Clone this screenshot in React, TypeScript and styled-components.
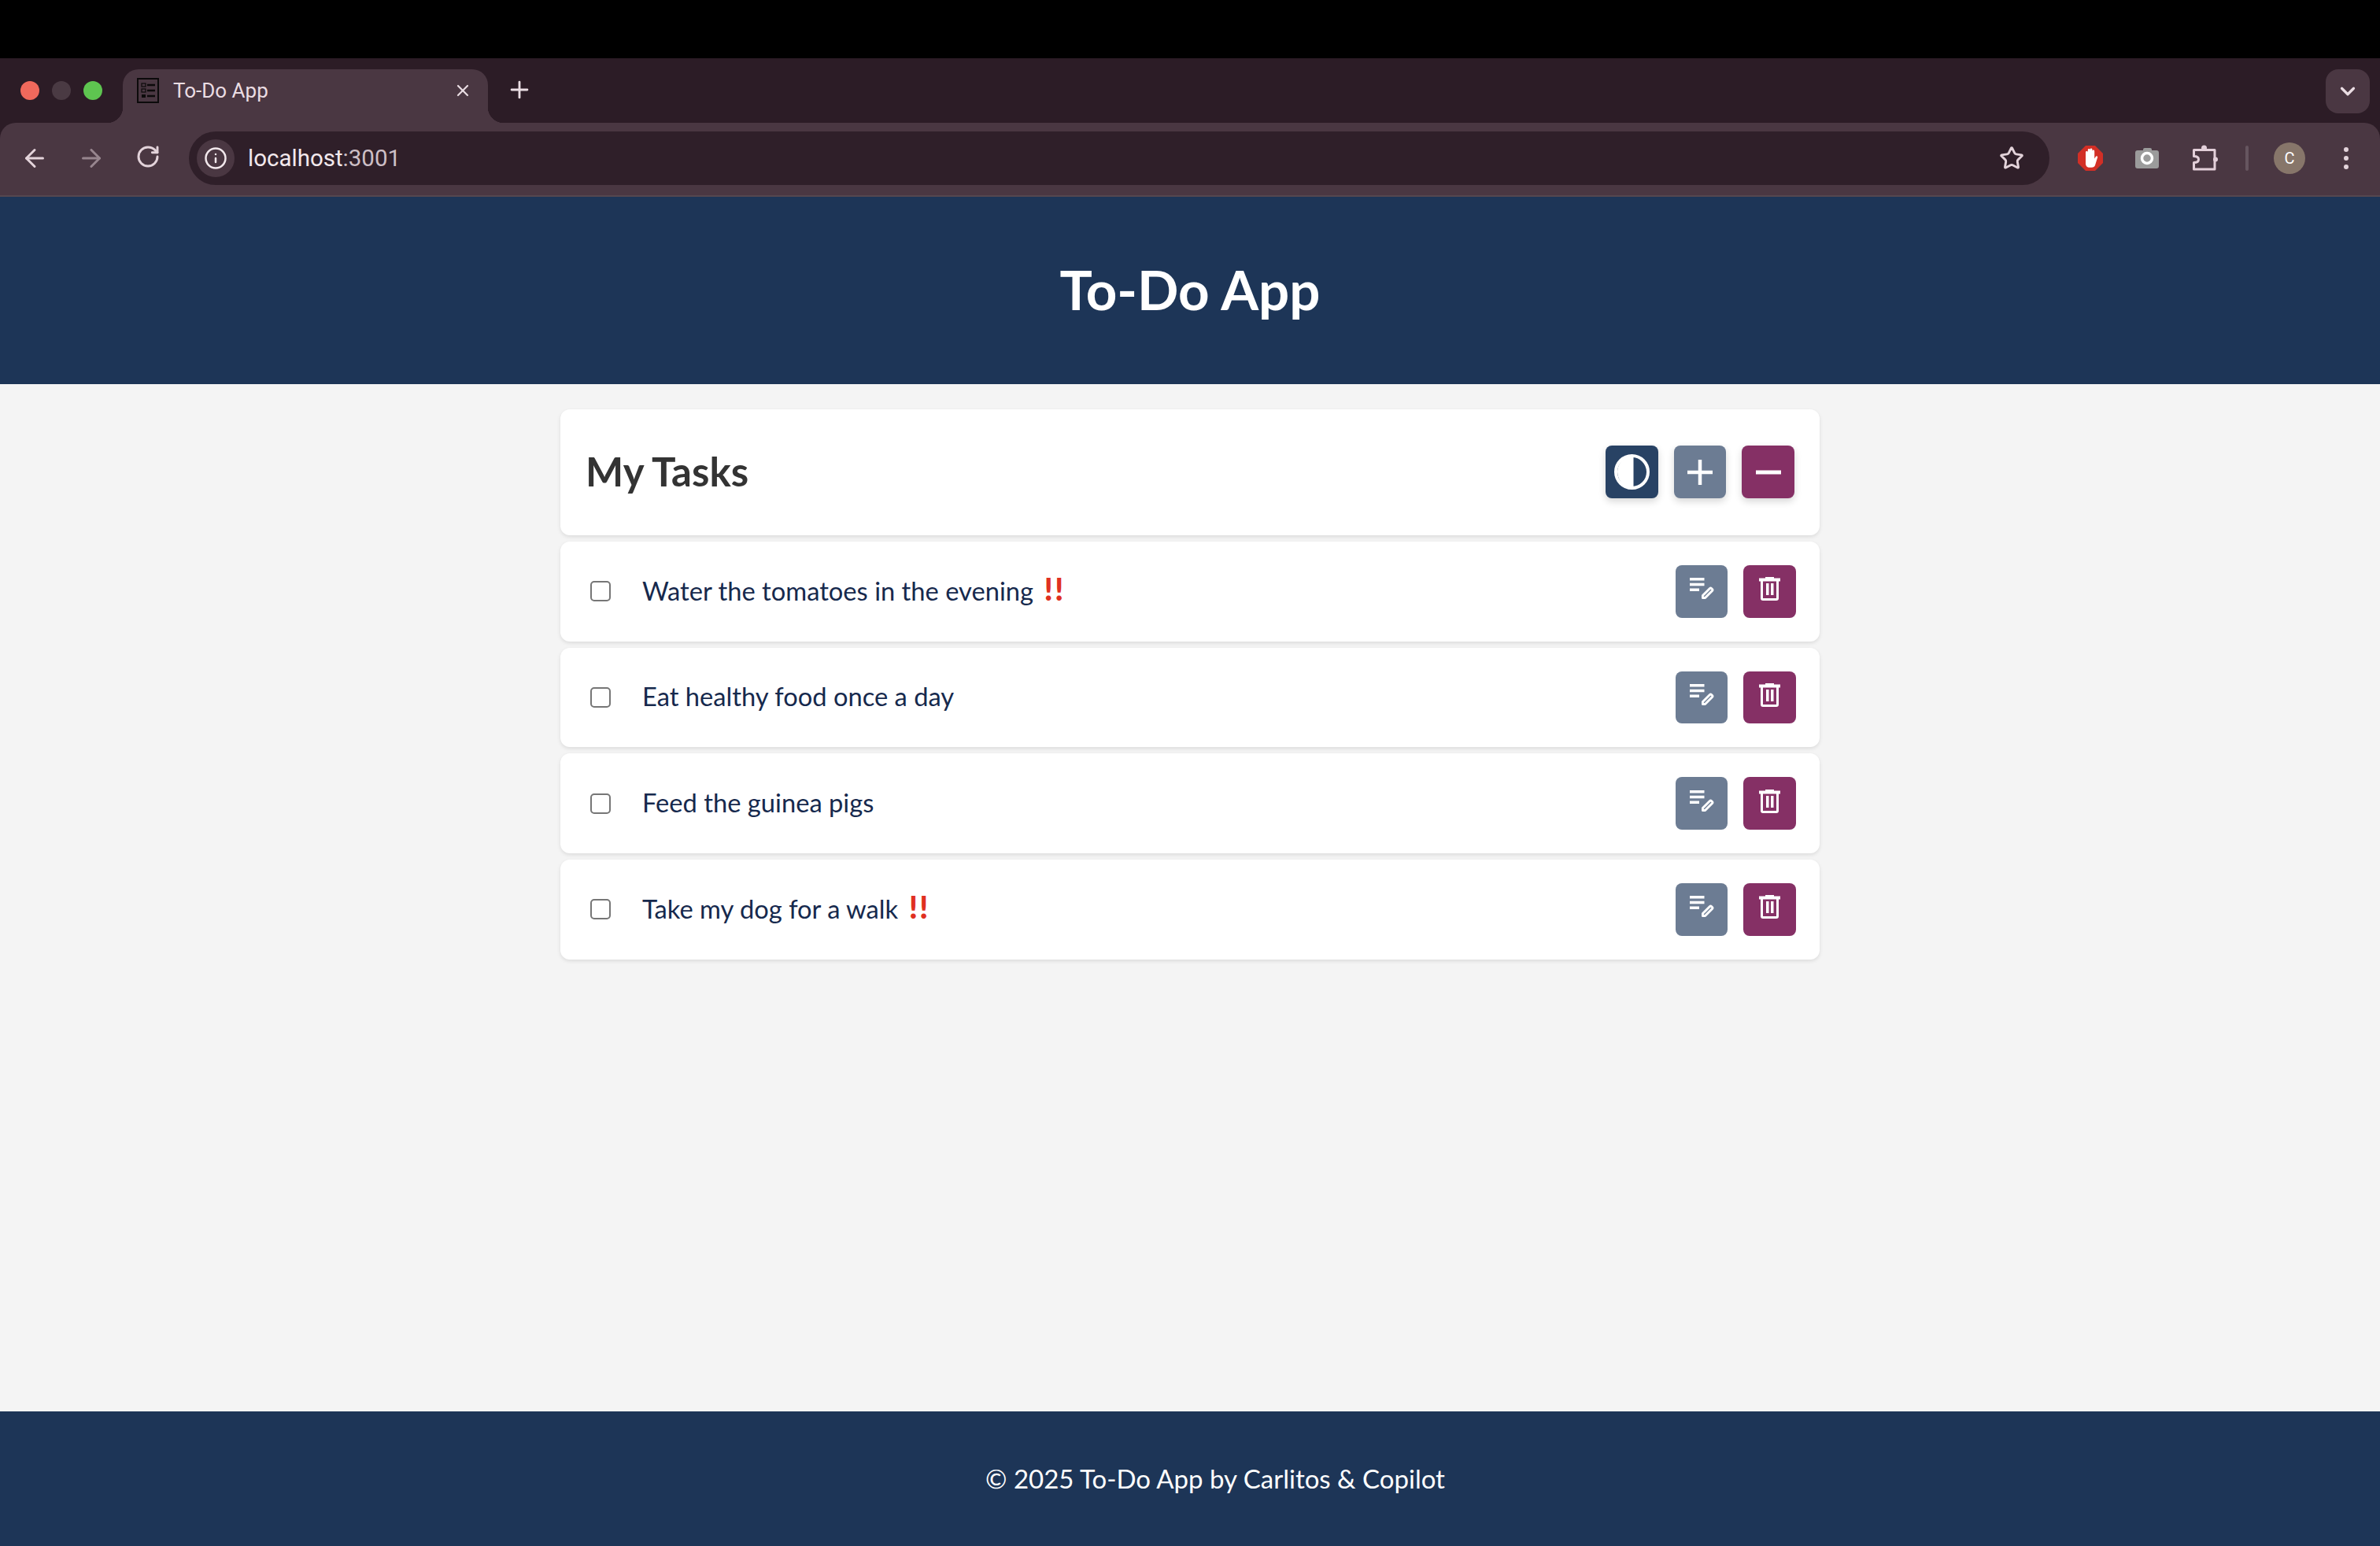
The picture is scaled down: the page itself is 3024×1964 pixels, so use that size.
import React from 'react';
import styled, { createGlobalStyle } from 'styled-components';
import { ArrowLeft, ArrowRight, Info, Plus, RotateCw, Star, X, ChevronDown } from 'lucide-react';

const GlobalStyle = createGlobalStyle`
  html, body { margin: 0; padding: 0; background: #f4f4f4; }
  * { box-sizing: border-box; }
`;

const Page = styled.div`
  display: flex;
  flex-direction: column;
  width: 3024px;
  height: 1964px;
  overflow: hidden;
  font-family: Lato, 'Noto Sans', sans-serif;
  background: #f4f4f4;
`;

const Notch = styled.div`
  flex: 0 0 74px;
  background: #000;
`;

const Chrome = styled.div`
  flex: 0 0 176px;
  display: flex;
  flex-direction: column;
  background: #2c1c26;
`;

const TabStrip = styled.div`
  flex: 0 0 82px;
  display: flex;
  align-items: flex-start;
  color: #eadde3;
  font-family: Roboto, sans-serif;
`;

const Lights = styled.div`
  display: flex;
  gap: 16px;
  padding: 29px 0 0 26px;
  width: 156px;
`;

const Light = styled.span<{ $color: string }>`
  width: 24px;
  height: 24px;
  border-radius: 50%;
  background: ${(p) => p.$color};
`;

const Tab = styled.div`
  position: relative;
  display: flex;
  align-items: center;
  width: 464px;
  height: 68px;
  margin-top: 14px;
  padding: 0 20px 14px 18px;
  border-radius: 20px 20px 0 0;
  background: #4a3742;
  font-size: 26px;

  &::before, &::after {
    content: '';
    position: absolute;
    bottom: 0;
    width: 20px;
    height: 20px;
    background: radial-gradient(circle at var(--cx) 0, transparent 20px, #4a3742 20.5px);
  }
  &::before { left: -20px; --cx: 0; }
  &::after { right: -20px; --cx: 20px; }
`;

const TabTitle = styled.span`
  flex: 1;
  margin-left: 18px;
`;

const NewTab = styled.div`
  display: flex;
  margin: 23px 0 0 23px;
`;

const TabMenu = styled.div`
  display: flex;
  align-items: center;
  justify-content: center;
  width: 56px;
  height: 56px;
  margin: 14px 13px 0 auto;
  border-radius: 16px;
  background: #4a3742;
`;

const Toolbar = styled.div`
  flex: 0 0 94px;
  display: flex;
  align-items: center;
  padding: 0 0 2px 26px;
  border-radius: 20px 20px 0 0;
  border-bottom: 2px solid #55474f;
  background: #4a3742;
  color: #e3d3da;
`;

const NavGroup = styled.div`
  display: flex;
  gap: 36px;
  margin-right: 34px;
`;

const NavButton = styled.div<{ $dim?: boolean }>`
  display: flex;
  justify-content: center;
  width: 36px;
  opacity: ${(p) => (p.$dim ? 0.5 : 1)};
`;

const Omnibox = styled.div`
  flex: 0 0 2364px;
  display: flex;
  align-items: center;
  height: 68px;
  padding: 0 32px 0 10px;
  border-radius: 34px;
  background: #2f1f29;
`;

const InfoChip = styled.div`
  display: flex;
  align-items: center;
  justify-content: center;
  width: 48px;
  height: 48px;
  border-radius: 50%;
  background: #4a3742;
  color: #f2e8ec;
`;

const Url = styled.span`
  flex: 1;
  margin-left: 17px;
  font-family: Roboto, sans-serif;
  font-size: 29.5px;
  color: #f2e8ec;

  & > span { color: #cdbfc6; }
`;

const Extensions = styled.div`
  display: flex;
  align-items: center;
`;

const ExtSlot = styled.div<{ $w: number }>`
  display: flex;
  justify-content: center;
  width: ${(p) => p.$w}px;
`;

const Divider = styled.div`
  width: 4px;
  height: 32px;
  margin-right: 32px;
  border-radius: 2px;
  background: #66555f;
`;

const Avatar = styled.div`
  display: flex;
  align-items: center;
  justify-content: center;
  width: 40px;
  height: 40px;
  border-radius: 50%;
  background: #87766a;
  color: #fff;
  font-family: Roboto, sans-serif;
  font-size: 20px;
`;

const Dots = styled.div`
  display: flex;
  flex-direction: column;
  gap: 5px;
  margin-left: 49px;

  & > span {
    width: 6px;
    height: 6px;
    border-radius: 50%;
    background: #e3d3da;
  }
`;

const Header = styled.header`
  flex: 0 0 238px;
  display: flex;
  align-items: center;
  justify-content: center;
  padding-bottom: 4px;
  background: #1d3557;
  color: #fff;
`;

const AppTitle = styled.h1`
  margin: 0;
  font-size: 69px;
  font-weight: 700;
`;

const Main = styled.main`
  flex: 1;
  display: flex;
  flex-direction: column;
  gap: 8px;
  width: 1600px;
  margin: 0 auto;
  padding-top: 32px;
`;

const Card = styled.div`
  display: flex;
  align-items: center;
  background: #fff;
  border-radius: 12px;
  box-shadow: 0 2px 5px rgba(0, 0, 0, 0.1);
`;

const TitleCard = styled(Card)`
  height: 160px;
  padding: 0 32px 1px 32px;
`;

const ListTitle = styled.h2`
  flex: 1;
  margin: 0 0 2px;
  color: #333;
  font-size: 51px;
  font-weight: 700;
`;

const Actions = styled.div`
  display: flex;
  gap: 20px;
`;

const IconButton = styled.button<{ $bg: string; $raised?: boolean; $w?: number }>`
  display: flex;
  align-items: center;
  justify-content: center;
  width: ${(p) => p.$w ?? 67}px;
  height: ${(p) => (p.$raised ? 67 : 66.5)}px;
  padding: 0;
  border: 0;
  border-radius: 8px;
  background: ${(p) => p.$bg};
  box-shadow: ${(p) => (p.$raised ? '0 4px 10px rgba(0, 0, 0, 0.16)' : 'none')};

  & > svg.row-icon { margin-bottom: 6px; }
`;

const TaskRow = styled(Card)`
  height: 126.67px;
  padding: 0 30px 0 38px;
`;

const Check = styled.span`
  flex: 0 0 26px;
  height: 26px;
  border: 2px solid #767676;
  border-radius: 5px;
  background: #fff;
`;

const TaskText = styled.span`
  flex: 1;
  margin: 0 0 2px 40px;
  color: #16294d;
  font-size: 32.7px;
`;

const Urgent = styled.span`
  margin-left: 2px;
  color: #e03021;
  font-size: 40px;
  font-weight: 900;
  line-height: 0;
  letter-spacing: 2px;
`;

const Footer = styled.footer`
  flex: 0 0 171px;
  display: flex;
  align-items: center;
  justify-content: center;
  padding: 0 0 2px 64px;
  background: #1d3557;
  color: #fff;
  font-size: 33px;
`;

const Favicon = () => (
  <svg width="28" height="32" viewBox="0 0 28 32">
    <rect x="1" y="1" width="26" height="30" fill="none" stroke="#0c0a0b" strokeWidth="2" />
    <rect x="6" y="7" width="5" height="4" fill="none" stroke="#0c0a0b" strokeWidth="1.2" />
    <rect x="6" y="14" width="5" height="4" fill="none" stroke="#0c0a0b" strokeWidth="1.2" />
    <rect x="6" y="21" width="5" height="4" fill="#0c0a0b" />
    <path d="M13 9h10M13 16h10M13 23h10" stroke="#0c0a0b" strokeWidth="2.4" />
  </svg>
);

const AdBlock = () => (
  <svg width="32" height="32" viewBox="0 0 32 32">
    <path d="M10 0h12l10 10v12L22 32H10L0 22V10z" fill="#d22f26" />
    <path
      d="M10 17V8.500a1.400 1.400 0 0 1 2.800 0V5.500a1.400 1.400 0 0 1 2.800 0V5a1.400 1.400 0 0 1 2.800 0v2a1.400 1.400 0 0 1 2.800 0v9.500l1.600-2.600c.9-1.400 3-.4 2.300 1.200L22 25c-.8 1.800-2 2.800-4.500 2.800H15c-3 0-5-2-5-5z"
      fill="#fff"
    />
  </svg>
);

const Camera = () => (
  <svg width="30" height="28" viewBox="0 0 30 28">
    <path
      d="M10 3q0-2 2-2h7q2 0 2 2v1h6q3 0 3 3v17q0 3-3 3H3q-3 0-3-3V7q0-3 3-3h7z"
      fill="#9b9b9b"
    />
    <circle cx="15" cy="14" r="6.500" fill="none" stroke="#fff" strokeWidth="3.500" />
  </svg>
);

const Puzzle = () => (
  <svg width="35" height="34" viewBox="-3 0 35 34" fill="none">
    <path
      d="M1.500 6.500h26.500v24.500H1.500v-8.500c4 0 6-1.500 6-4s-2-4-6-4z"
      stroke="#e3cfd9"
      strokeWidth="3"
      strokeLinejoin="round"
    />
    <circle cx="14.500" cy="4" r="3.500" fill="#e3cfd9" />
    <circle cx="29" cy="18.500" r="3" fill="#e3cfd9" />
  </svg>
);

const ContrastIcon = () => (
  <svg width="45" height="45" viewBox="0 0 45 45">
    <circle cx="22.500" cy="22.500" r="20.500" fill="none" stroke="#fff" strokeWidth="4" />
    <path d="M24.500 2A20.500 20.500 0 0 0 24.500 43z" fill="#fff" />
  </svg>
);

const PlusIcon = () => (
  <svg width="32" height="32" viewBox="0 0 32 32">
    <path d="M16 0v32M0 16h32" stroke="#fff" strokeWidth="4.500" />
  </svg>
);

const MinusIcon = () => (
  <svg width="32" height="32" viewBox="0 0 32 32">
    <path d="M0 16h32" stroke="#fff" strokeWidth="5" />
  </svg>
);

const EditIcon = () => (
  <svg className="row-icon" width="31" height="28" viewBox="0 0 31 28" fill="none">
    <path d="M0 1.800h18.500M0 8.500h18.500M0 15.300h12" stroke="#fff" strokeWidth="3.500" />
    <path
      d="M16.500 25.500v-3l9-9a1.500 1.500 0 0 1 2 0l1 1a1.500 1.500 0 0 1 0 2l-9 9z"
      stroke="#fff"
      strokeWidth="3"
      strokeLinejoin="round"
    />
  </svg>
);

const TrashIcon = () => (
  <svg className="row-icon" width="27" height="30" viewBox="0 0 27 30" fill="none">
    <path d="M8 0h11v3H8zM0 1.500h27v4H0z" fill="#fff" />
    <path d="M3.500 5v22q0 1.500 1.500 1.500h17q1.500 0 1.500-1.500V5" stroke="#fff" strokeWidth="3" />
    <path d="M9 8h3.500v15H9zM15 8h3.500v15H15z" fill="#fff" />
  </svg>
);

const tasks = [
  { title: 'Water the tomatoes in the evening', urgent: true },
  { title: 'Eat healthy food once a day', urgent: false },
  { title: 'Feed the guinea pigs', urgent: false },
  { title: 'Take my dog for a walk', urgent: true },
];

const BrowserChrome = () => (
  <Chrome>
    <TabStrip>
      <Lights>
        <Light $color="#f0695c" />
        <Light $color="#4a3a43" />
        <Light $color="#5ec550" />
      </Lights>
      <Tab>
        <Favicon />
        <TabTitle>To-Do App</TabTitle>
        <X size={24} strokeWidth={2.2} />
      </Tab>
      <NewTab>
        <Plus size={34} strokeWidth={2} />
      </NewTab>
      <TabMenu>
        <ChevronDown size={30} strokeWidth={2.6} />
      </TabMenu>
    </TabStrip>
    <Toolbar>
      <NavGroup>
        <NavButton>
          <ArrowLeft size={36} strokeWidth={2} />
        </NavButton>
        <NavButton $dim>
          <ArrowRight size={36} strokeWidth={2} />
        </NavButton>
        <NavButton>
          <RotateCw size={32} strokeWidth={2.2} />
        </NavButton>
      </NavGroup>
      <Omnibox>
        <InfoChip>
          <Info size={30} strokeWidth={2} />
        </InfoChip>
        <Url>
          localhost<span>:3001</span>
        </Url>
        <Star size={32} strokeWidth={2.2} />
      </Omnibox>
      <Extensions>
        <ExtSlot $w={104}>
          <AdBlock />
        </ExtSlot>
        <ExtSlot $w={40}>
          <Camera />
        </ExtSlot>
        <ExtSlot $w={105}>
          <Puzzle />
        </ExtSlot>
        <Divider />
        <Avatar>C</Avatar>
        <Dots>
          <span />
          <span />
          <span />
        </Dots>
      </Extensions>
    </Toolbar>
  </Chrome>
);

export default function App(): JSX.Element {
  return (
    <Page>
      <GlobalStyle />
      <Notch />
      <BrowserChrome />
      <Header>
        <AppTitle>To-Do App</AppTitle>
      </Header>
      <Main>
        <TitleCard>
          <ListTitle>My Tasks</ListTitle>
          <Actions>
            <IconButton $bg="#284264" $raised>
              <ContrastIcon />
            </IconButton>
            <IconButton $bg="#6c7c93" $raised $w={66}>
              <PlusIcon />
            </IconButton>
            <IconButton $bg="#853065" $raised>
              <MinusIcon />
            </IconButton>
          </Actions>
        </TitleCard>
        {tasks.map((task) => (
          <TaskRow key={task.title}>
            <Check />
            <TaskText>
              {task.title}
              {task.urgent && <Urgent> !!</Urgent>}
            </TaskText>
            <Actions>
              <IconButton $bg="#6c7c93" $w={66}>
                <EditIcon />
              </IconButton>
              <IconButton $bg="#853065">
                <TrashIcon />
              </IconButton>
            </Actions>
          </TaskRow>
        ))}
      </Main>
      <Footer>© 2025 To-Do App by Carlitos &amp; Copilot</Footer>
    </Page>
  );
}
